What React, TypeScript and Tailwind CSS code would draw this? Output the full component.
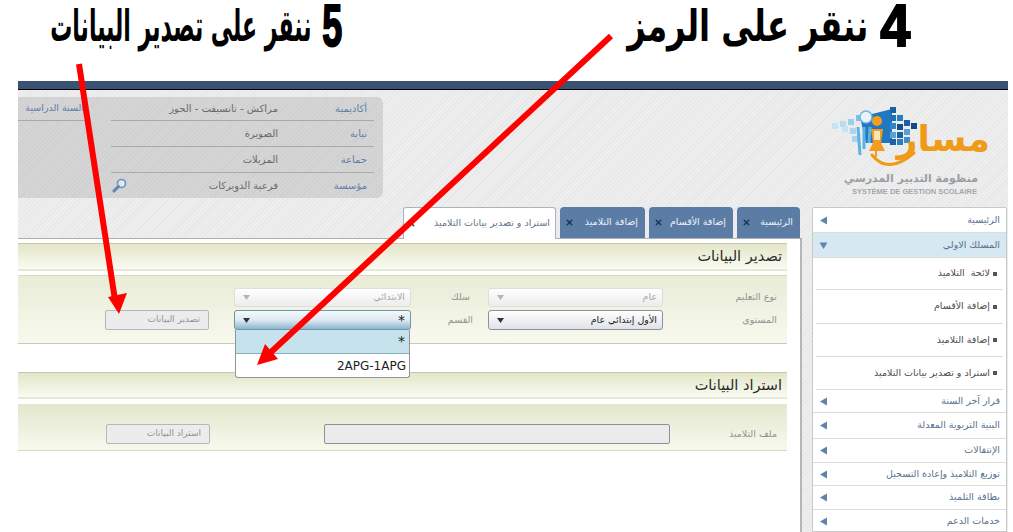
import { X } from "lucide-react";

const stripes =
  "bg-[repeating-linear-gradient(135deg,#e7e7e7_0px,#e7e7e7_1px,#eeeeee_1px,#eeeeee_3px)]";
const cardStripes =
  "bg-[repeating-linear-gradient(135deg,#cfcfcf_0px,#cfcfcf_1px,#d5d5d5_1px,#d5d5d5_3px)]";

const infoRows = [
  { label: "أكاديمية", value: "مراكش - تانسيفت - الحوز", h: "h-[24px]" },
  { label: "نيابة", value: "الصويرة", h: "h-[26px]" },
  { label: "جماعة", value: "المزيلات", h: "h-[26px]" },
  { label: "مؤسسة", value: "فرعية الدويركات", h: "h-[25px]" },
];

const tabs = [
  { label: "الرئيسية", w: "w-[63px]" },
  { label: "إضافة الأقسام", w: "w-[84px]" },
  { label: "إضافة التلاميذ", w: "w-[85px]" },
];

const subItems = [
  { label: "لائحة\u00a0 التلاميذ", h: "h-[32px]" },
  { label: "إضافة الأقسام", h: "h-[34px]" },
  { label: "إضافة التلاميذ", h: "h-[33px]" },
  { label: "استراد و تصدير بيانات التلاميذ", h: "h-[33px]" },
];

const lowerItems = [
  { label: "قرار آخر السنة", h: "h-[23px]" },
  { label: "البنية التربوية المعدلة", h: "h-[26px]" },
  { label: "الإنتقالات", h: "h-[24px]" },
  { label: "توزيع التلاميذ وإعادة التسجيل", h: "h-[23px]" },
  { label: "بطاقة التلميذ", h: "h-[24px]" },
  { label: "خدمات الدعم", h: "h-[24px]" },
];

function Tri({ dir, color = "#5f84ab" }: { dir: "left" | "down"; color?: string }) {
  return (
    <svg width="9" height="9" viewBox="0 0 9 9" className="shrink-0">
      <polygon
        points={dir === "left" ? "8,0.5 8,8.5 1,4.5" : "0.5,1.5 8.5,1.5 4.5,8"}
        fill={color}
      />
    </svg>
  );
}

function MenuRow({ label, h, active }: { label: string; h: string; active?: boolean }) {
  return (
    <div
      className={`${h} flex items-center justify-between pr-[6px] pl-[6px] border-b border-[#dcdcdc] text-[9.5px] text-[#56718e] ${
        active ? "bg-[#d6e8f2]" : "bg-white"
      }`}
    >
      <span>{label}</span>
      <Tri dir={active ? "down" : "left"} />
    </div>
  );
}

function SelectBox({
  text,
  state,
  big,
}: {
  text: string;
  state: "off" | "on" | "focus";
  big?: boolean;
}) {
  const look = {
    off: "border-[#dedede] bg-gradient-to-b from-white to-[#ececec] text-[#a8a8a8]",
    on: "border-[#8d9299] bg-gradient-to-b from-white to-[#dfe2e8] text-[#222222]",
    focus: "border-[#6d97a8] bg-gradient-to-b from-[#f4f9fb] via-[#dfeaf1] to-[#8db5cf] text-[#222222]",
  }[state];
  return (
    <div className={`h-full rounded-[3px] border flex items-center justify-between pr-[5px] pl-[8px] ${big ? "text-[14px]" : "text-[9.5px]"} ${look}`}>
      <span>{text}</span>
      <svg width="7" height="5" viewBox="0 0 7 5">
        <polygon points="0,0 7,0 3.5,5" fill={state === "off" ? "#b5b5b5" : "#2b3440"} />
      </svg>
    </div>
  );
}

function FlatButton({ text }: { text: string }) {
  return (
    <div className="h-full rounded-[2px] border border-[#b4b8bc] bg-[#ececec] flex items-center pr-[8px] text-[9px] text-[#8d959c]">
      {text}
    </div>
  );
}

function SectionHead({ text, h }: { text: string; h: string }) {
  return (
    <div className={`${h} border-t border-[#c6c8aa] border-b-2 border-b-[#e6e8da] bg-gradient-to-b from-[#e3e6c8] to-[#fafbf2] flex items-center pr-[5px] text-[14.5px] leading-none text-[#2a2a2a]`}>
      {text}
    </div>
  );
}

function Logo() {
  return (
    <div className="w-[160px] mr-[18px] mt-[13px] flex flex-col items-start">
      <svg width="160" height="66" viewBox="0 0 160 66">
        <path d="M30 14 L62 6 L62 40 L36 40 Z" fill="#1f78c0" />
        {[
          [60, 4, "#1c5fa5"], [67, 12, "#2a7dc0"], [60, 12, "#1f6fb5"], [60, 20, "#2f86c8"], [67, 21, "#154f8f"],
          [74, 17, "#1c5fa5"], [81, 20, "#134a85"], [60, 29, "#5b9fd6"], [67, 29, "#1c5fa5"], [74, 26, "#5b9fd6"],
          [60, 36, "#1c5fa5"], [67, 36, "#2a7dc0"], [74, 34, "#3d8fcc"],
          [26, 12, "#7cc0e6"], [18, 16, "#9ad0ea"], [10, 18, "#b5dcef"], [2, 20, "#c6e4f2"], [20, 25, "#a8d6ec"], [12, 23, "#c6e4f2"], [22, 33, "#a8d6ec"],
        ].map(([x, y, c], i) => (
          <rect key={i} x={x as number} y={y as number} width="6" height="6" fill={c as string} />
        ))}
        <circle cx="36" cy="14" r="6" fill="#e8f3fa" stroke="#6db7e2" strokeWidth="1.5" />
        <path d="M28 24 L30 52 M34 24 L34 46 M40 24 L39 40" stroke="#5db2e2" strokeWidth="3" fill="none" />
        <circle cx="47" cy="18" r="5" fill="#f39c1f" />
        <path d="M41 26 L53 26 L51 40 L55 48 L39 48 L43 40 Z" fill="#f39c1f" />
        <rect x="44" y="28" width="6" height="9" fill="#fbe3b8" />
        <path d="M46 48 V54" stroke="#f39c1f" strokeWidth="2" />
        {/* swoosh under the figure */}
        <path d="M42 52 Q58 72 84 50" stroke="#f09b17" strokeWidth="3" fill="none" strokeLinecap="round" />
        <text
          x="160"
          y="48"
          direction="rtl"
          textAnchor="start"
          fontFamily="DejaVu Sans, sans-serif"
          fontWeight="700"
          fontSize="36"
          fill="#f09b17"
        >
          مسار
        </text>
      </svg>
      <div className="mr-[12px] text-[11px] leading-[13px] tracking-[0.6px] font-bold text-[#9a9fa3] mt-[3px] whitespace-nowrap">
        منظومة التدبير المدرسي
      </div>
      <div dir="ltr" className="mr-[13px] text-[7.5px] leading-[10px] font-bold text-[#a3a7aa] mt-[2px] whitespace-nowrap font-['Liberation_Sans',sans-serif]">
        SYSTÈME DE GESTION SCOLAIRE
      </div>
    </div>
  );
}

function Title({ num, text, gap, squeeze, numSqueeze }: { num: string; text: string; gap: string; squeeze: string; numSqueeze: string }) {
  return (
    <div className={`flex items-start -mt-[4px] ${gap}`}>
      <span className={`font-['Liberation_Sans',sans-serif] font-black text-[60px] leading-[60px] h-[60px] ${numSqueeze} origin-right [-webkit-text-stroke:2px_black]`}>
        {num}
      </span>
      <span className={`text-[44px] leading-[60px] h-[60px] ${squeeze} origin-right`}>{text}</span>
    </div>
  );
}

export default function App() {
  return (
    <div
      dir="rtl"
      className="relative w-[1013px] h-[532px] overflow-hidden bg-white font-['DejaVu_Sans',sans-serif]"
    >
      <header className="h-[81px] flex items-start text-black font-bold whitespace-nowrap">
        <div className="mr-[103px] w-[280px]">
          <Title num="4" text="ننقر على الرمز" gap="gap-[8px]" squeeze="scale-x-[0.73]" numSqueeze="scale-x-[0.9]" />
        </div>
        <div className="mr-[288px]">
          <Title num="5" text="ننقر على تصدير البيانات" gap="-ml-[0px] gap-[0px]" squeeze="scale-x-[0.5] -mr-[3px]" numSqueeze="scale-x-[0.6]" />
        </div>
      </header>

      <div className="ml-[18px] mr-[5px] h-[451px] flex flex-col">
        <div className="h-[9px] shrink-0 bg-[#3a5372] border-b border-black" />

        <div className={`${stripes} flex-1 flex flex-col min-h-0`}>
          {/* logo + school info */}
          <div className="h-[117px] shrink-0 flex justify-between">
            <Logo />
            <div className="mt-[7px] flex h-[101px] w-[365px]">
              <div className={`${cardStripes} rounded-r-[6px] w-[365px] h-full flex`}>
                <div className="w-[272px] pr-[9px] shrink-0">
                  {infoRows.map((r, i) => (
                    <div
                      key={r.label}
                      className={`${r.h} flex items-center ${i < 3 ? "border-b border-[#a9a9a9]" : ""}`}
                    >
                      <span className="w-[96px] pr-[7px] text-[10px] text-[#5e7ea8] shrink-0">{r.label}</span>
                      <span className="flex-1 text-[10px] text-[#6a6a6a]">{r.value}</span>
                      {i === 3 && (
                        <svg width="15" height="15" viewBox="0 0 15 15" className="ml-[1px]">
                          <circle cx="9.5" cy="5.5" r="4" fill="#dfe8f0" stroke="#6f94bb" strokeWidth="1.6" />
                          <path d="M6.5 8.5 L2 13" stroke="#5f86b0" strokeWidth="3" strokeLinecap="round" />
                        </svg>
                      )}
                    </div>
                  ))}
                </div>
                <div className="w-[27px] shrink-0" />
                <div className="flex-1">
                  <div className="h-[24px] border-b border-[#a9a9a9] flex items-center text-[9.5px] text-[#5e7ea8] whitespace-nowrap overflow-hidden">
                    السنة الدراسية
                  </div>
                </div>
              </div>
            </div>
          </div>

          <div className="flex-1 flex min-h-0">
            {/* side menu */}
            <aside className="w-[195px] shrink-0 mr-[1px] bg-white border border-[#c9c9c9] rounded-t-[2px] overflow-hidden self-stretch">
              <MenuRow label="الرئيسية" h="h-[25px]" />
              <MenuRow label="المسلك الاولي" h="h-[25px]" active />
              {subItems.map((s) => (
                <div
                  key={s.label}
                  className={`${s.h} mx-[3px] border-b border-[#dcdcdc] flex items-center gap-[3px] pr-[6px] text-[9.5px] text-[#4c4c4c]`}
                >
                  <span className="w-[4px] h-[4px] bg-[#555555] shrink-0" />
                  {s.label}
                </div>
              ))}
              {lowerItems.map((m) => (
                <MenuRow key={m.label} label={m.label} h={m.h} />
              ))}
            </aside>

            {/* tabs + page */}
            <main className="mr-[10px] flex-1 flex flex-col min-w-0">
              <div className="h-[32px] shrink-0 flex gap-[4px] pr-[2px] border-b border-[#a9afb8] items-end">
                {tabs.map((t) => (
                  <div
                    key={t.label}
                    className={`${t.w} h-[31px] rounded-t-[4px] bg-[#5a7ca5] flex items-center justify-between pr-[7px] pl-[5px] text-[9.5px] text-[#eef3f7] whitespace-nowrap`}
                  >
                    <span>{t.label}</span>
                    <X size={9} strokeWidth={4} className="text-[#22364e]" />
                  </div>
                ))}
                <div className="w-[153px] h-[32px] -mb-px rounded-t-[3px] bg-white border border-b-0 border-[#a9b4bd] flex items-center justify-between pr-[5px] pl-[3px] text-[9.5px] text-[#5f7487] whitespace-nowrap">
                  <span>استراد و تصدير بيانات التلاميذ</span>
                  <X size={9} strokeWidth={4} className="text-[#22364e]" />
                </div>
              </div>

              <div className="flex-1 bg-white border-r-2 border-[#b3b7bc] pt-[4px] pr-[13px]">
                <SectionHead text="تصدير البيانات" h="h-[28px]" />

                <div className="mt-[4px] h-[69px] pt-[12px] border-t border-[#d6d8bf] border-b border-b-[#c9cbb3] bg-gradient-to-b from-[#e9ecd6] to-[#f8f9ee]">
                  <div className="grid grid-cols-[124px_175px_77px_177px_25px_104px] grid-rows-[19px_20px] gap-y-[3px] text-[9.5px] text-[#8f9497]">
                    <div className="pr-[10px] flex items-center">نوع التعليم</div>
                    <SelectBox text="عام" state="off" />
                    <div className="pr-[18px] flex items-center">سلك</div>
                    <SelectBox text="الابتدائي" state="off" />
                    <div className="col-span-2" />

                    <div className="pr-[10px] flex items-center">المستوى</div>
                    <SelectBox text="الأول إبتدائي عام" state="on" />
                    <div className="pr-[15px] flex items-center">القسم</div>
                    <div className="relative">
                      <SelectBox text="*" state="focus" big />
                      <div className="absolute top-full inset-x-[1px] h-[48px] rounded-b-[3px] border border-t-0 border-[#8f9499] bg-white overflow-hidden text-[12px] text-[#222222] z-10">
                        <div className="h-[24px] bg-[#c6e2ec] border-b border-[#86b0bd] flex items-center pr-[4px] text-[14px]">*</div>
                        <div className="h-[24px] flex items-center pr-[3px]">2APG-1APG</div>
                      </div>
                    </div>
                    <div />
                    <FlatButton text="تصدير البيانات" />
                  </div>
                </div>

                <div className="mt-[28px]">
                  <SectionHead text="استراد البيانات" h="h-[27px]" />
                </div>

                <div className="mt-[5px] h-[47px] pt-[20px] border-b border-[#d6d8bf] bg-gradient-to-b from-[#e4e7cd] to-[#f8f9ee]">
                  <div className="grid grid-cols-[117px_346px_114px_104px] grid-rows-[20px] text-[9.5px] text-[#8f9497]">
                    <div className="pr-[10px] flex items-center">ملف التلاميذ</div>
                    <div className="rounded-[2px] border border-[#8d9299] bg-[#ebebeb]" />
                    <div />
                    <FlatButton text="استراد البيانات" />
                  </div>
                </div>
              </div>
            </main>
          </div>
        </div>
      </div>

      {/* red annotation arrows */}
      <svg className="absolute inset-0 pointer-events-none z-20" width="1013" height="532" viewBox="0 0 1013 532">
        <path d="M79 64 L115 300" stroke="#ff0000" strokeWidth="6" fill="none" />
        <polygon points="108,297 127,293 119,314" fill="#ff0000" />
        <path d="M611 36 L270 353" stroke="#ff0000" strokeWidth="6" fill="none" />
        <polygon points="265,344 278,359 257,365" fill="#ff0000" />
      </svg>
    </div>
  );
}
